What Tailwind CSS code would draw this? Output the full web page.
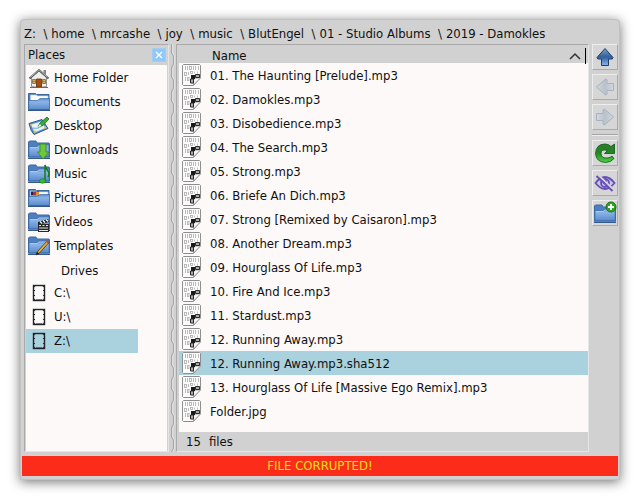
<!DOCTYPE html>
<html lang="en">
<head>
<meta charset="utf-8">
<meta name="viewport" content="width=device-width, initial-scale=1">
<title>File manager</title>
<script src="https://cdn.jsdelivr.net/npm/@tailwindcss/browser@4"></script>
</head>
<body class="h-screen bg-white px-5 pt-[19px] pb-[18px] font-['DejaVu_Sans_Condensed','DejaVu_Sans',sans-serif] text-[13px] leading-4 text-[#101010]">
<svg class="absolute size-0" aria-hidden="true">
  <defs>
    <linearGradient id="blue" x1="0" y1="0" x2="0" y2="1"><stop offset="0" stop-color="#5c8fd0"/><stop offset=".3" stop-color="#8bb4e6"/><stop offset="1" stop-color="#5a8bcc"/></linearGradient>
    <linearGradient id="up" x1="0" y1="0" x2="0" y2="1"><stop offset="0" stop-color="#7ba0bf"/><stop offset=".5" stop-color="#315f9c"/><stop offset="1" stop-color="#8ab6f2"/></linearGradient>
    <linearGradient id="green" x1="0" y1="0" x2="0" y2="1"><stop offset="0" stop-color="#2f7a2f"/><stop offset=".5" stop-color="#1f8a1f"/><stop offset="1" stop-color="#4cd542"/></linearGradient>
    <linearGradient id="pale" x1="0" y1="0" x2="0" y2="1"><stop offset="0" stop-color="#d5d8dc"/><stop offset=".5" stop-color="#b9c1ca"/><stop offset="1" stop-color="#d3d8de"/></linearGradient>
    <symbol id="folder" viewBox="0 0 22 20">
      <path d="M.5 17V2L1.500 1H8l1 2h12l.5 1v13z" fill="#4f80be" stroke="#3a68a5"/>
      <path d="M1 6.500H9l1.500-1.500h10.500v11.500H1z" fill="url(#blue)" stroke="#3f70b0" stroke-width=".7"/>
      <path d="M0 17.500h22v1.500H0z" fill="#35598a"/>
      <path d="M2 7.500h7.500L11 6h9.500" fill="none" stroke="#acd0f5" stroke-width=".8"/>
    </symbol>
    <symbol id="openfolder" viewBox="0 0 22 20">
      <path d="M.5 17V1.500h7l1 1h12.500v14.500z" fill="#4f80be" stroke="#3a68a5"/>
      <path d="M2.500 3h6l1 1h10.500v5H2.500z" fill="#fff" stroke="#bdc8d8" stroke-width=".6"/>
      <path d="M.7 8.500h9l2-2h9.800v11H.7z" fill="url(#blue)" stroke="#3467a8" stroke-width=".7"/>
      <path d="M0 17.500h22v1.500H0z" fill="#35598a"/>
    </symbol>
    <symbol id="file" viewBox="0 0 20 22">
      <path d="M1.500.5h16l1 1v12l-7 8h-10l-1-1V1.500z" fill="#fbfbfb" stroke="#8e8e8e"/>
      <g fill="none" stroke="#b4b4b4" stroke-width=".9">
        <path d="M3.500 2v4M5.500 2v4M11.500 2v4M13.500 2v4M16.500 2v4M6.500 8v3M12.500 7.500v2M15.500 7.500v2M3.500 13v4"/>
        <rect x="7.500" y="2.500" width="2" height="3"/><rect x="2.500" y="8.500" width="2" height="3"/><rect x="8.500" y="7.500" width="2" height="2"/><rect x="5.500" y="13.500" width="1.500" height="3"/>
      </g>
      <path d="M11.500 21v-5l1.500-2h5.500z" fill="#f5f5f5" stroke="#8a8a8a" stroke-width=".8"/>
      <path d="M9 11h4v4H9z" fill="#171717"/>
      <path d="M13.500 10.500h4v3h-4zM8.500 15h3v4h-3z" fill="#aaa" stroke="#2b2b2b"/>
    </symbol>
    <symbol id="drive" viewBox="0 0 14 18">
      <rect x="1.500" y="1.500" width="11" height="15" fill="none" stroke="#202427" stroke-width="1.400"/>
      <path d="M1 3l1-2h2.500L2 3.500zM13 3l-1-2H9.500l2.500 2.500zM1 15l1 2h2.500L2 14.500zM13 15l-1 2H9.500l2.500-2.500z" fill="#202427"/>
      <path d="M4 15.500h6V17H4zM2 6h1v1H2zM11 6h1v1h-1zM2 11h1v1H2zM11 11h1v1h-1z" fill="#202427"/>
    </symbol>
    <symbol id="home" viewBox="0 0 22 22">
      <path d="M3.500 10v9.500l7.500 1 7.500-1V10L11 4z" fill="#eeeeea" stroke="#777" stroke-width=".8"/>
      <path d="M15.500 3H18v5l-2.500-2z" fill="#888"/>
      <path d="M1.500 11.500L11 3l9.500 8.500" fill="none" stroke="#54585b" stroke-width="2"/>
      <path d="M2.500 10.300L11 2.700l8.500 7.600" fill="none" stroke="#b8bcbf" stroke-width=".9"/>
      <path d="M8.500 12h5v8h-5z" fill="#a94e0d" stroke="#5e2d0b" stroke-width=".8"/>
      <path d="M4.500 12.500h3v4h-3zM14.500 12.500h3v4h-3z" fill="#e9c481" stroke="#866336" stroke-width=".8"/>
      <path d="M6 12.500v4M4.500 14.500h3M16 12.500v4M14.500 14.500h3" stroke="#866336" stroke-width=".5"/>
      <path d="M2 20.500h18" stroke="#666"/>
    </symbol>
    <symbol id="desktop" viewBox="0 0 22 20">
      <path d="M1 7.500L14 3.500l6 9L6 18.500Q3 16 1 7.500z" fill="#5791dc" stroke="#2a5799"/>
      <path d="M3 8.500l10-3 4.500 6.500-11 4.500z" fill="#e3f2fb"/>
      <path d="M2 8.500l3-.8-2 3zM5.500 17l1-3 2.500 2zM15 13l2-3 2 2z" fill="#f5c72e"/>
      <path d="M5 12q5 2 10-4" fill="none" stroke="#9ac0d7" stroke-width="1.500"/>
      <path d="M10 11l2-4 7-6 2 2-6 6.500z" fill="#3caa35" stroke="#1c6d20" stroke-width=".8"/>
      <path d="M9.500 11.500L12 8l1.500 2z" fill="#eee"/>
    </symbol>
    <symbol id="arrow" viewBox="0 0 20 20"><path d="M10 1.500l8 9-.8 1.500H13.500v6.500h-7V12H2.800L2 10.500z" stroke-linejoin="round"/></symbol>
  </defs>
</svg>

<main class="flex h-full flex-col rounded-t-[4px] border border-[#c2c2c2] bg-[#d1d1d1] px-px pb-[3px] shadow-[0_2px_12px_rgba(0,0,0,0.55)]">
  <nav aria-label="Path" class="flex h-6 shrink-0 items-center gap-1 pt-1 pl-0.5 whitespace-pre">
    <button type="button">Z:  \</button>
    <button type="button">home  \</button>
    <button type="button">mrcashe  \</button>
    <button type="button">joy  \</button>
    <button type="button">music  \</button>
    <button type="button">BlutEngel  \</button>
    <button type="button">01 - Studio Albums  \</button>
    <button type="button">2019 - Damokles</button>
  </nav>

  <div class="flex min-h-0 flex-1 pl-0.5">
    <aside class="flex w-[145px] shrink-0 flex-col border-t border-r border-b border-l border-t-[#a9a9a9] border-r-[#e5e5e5] border-b-[#e5e5e5] border-l-[#a9a9a9] pl-px pr-px">
      <header class="flex h-5 shrink-0 items-center justify-between pr-0.5 pl-0.5">
        <h2>Places</h2>
        <button type="button" aria-label="Close places" class="flex size-3 items-center justify-center bg-[#8fc8fa] outline outline-[#a8ccec]">
          <svg viewBox="0 0 8 8" class="size-2"><path d="M1 1l6 6M7 1L1 7" stroke="#fff" stroke-width="1.300"/></svg>
        </button>
      </header>
      <ul class="min-h-0 flex-1 bg-[#fdf9f8]">
        <li><a href="#home" class="flex h-6 items-center gap-1 pt-0.5 pl-0.5"><svg class="h-[22px] w-[22px]"><use href="#home"/></svg>Home Folder</a></li>
        <li><a href="#documents" class="flex h-6 items-center gap-1 pt-0.5 pl-0.5"><svg class="h-5 w-[22px]"><use href="#openfolder"/></svg>Documents</a></li>
        <li><a href="#desktop" class="flex h-6 items-center gap-1 pt-0.5 pl-0.5"><svg class="h-5 w-[22px]"><use href="#desktop"/></svg>Desktop</a></li>
        <li><a href="#downloads" class="flex h-6 items-center gap-1 pt-0.5 pl-0.5"><svg class="h-5 w-[22px]" viewBox="0 0 22 20"><use href="#folder" width="22" height="20"/><path d="M12 4h6v8h3l-6 7-5.500-7H12z" fill="#6dc63b" stroke="#338b20" stroke-width=".8"/></svg>Downloads</a></li>
        <li><a href="#music" class="flex h-6 items-center gap-1 pt-0.5 pl-0.5"><svg class="h-5 w-[22px]" viewBox="0 0 22 20"><use href="#folder" width="22" height="20"/><path d="M17 17V1q1 4 3 6t0 6" fill="none" stroke="#147c1b" stroke-width="1.500"/><ellipse cx="14.500" cy="17" rx="3" ry="2.200" fill="#35bb2c" stroke="#147c1b" stroke-width=".7"/></svg>Music</a></li>
        <li><a href="#pictures" class="flex h-6 items-center gap-1 pt-0.5 pl-0.5"><svg class="h-5 w-[22px]" viewBox="0 0 22 20"><use href="#openfolder" width="22" height="20"/><path d="M3 3.500h8v4H3z" fill="#3d1835"/><path d="M5 4h3v3H5z" fill="#8b366e"/><path d="M8 4h3v3H8z" fill="#dc9332"/></svg>Pictures</a></li>
        <li><a href="#videos" class="flex h-6 items-center gap-1 pt-0.5 pl-0.5"><svg class="h-5 w-[22px]" viewBox="0 0 22 20"><use href="#folder" width="22" height="20"/><path d="M10 10l10-3 1 3-11 3z" fill="#222"/><path d="M12 9.500l2 2M15 8.500l2 2M18 7.500l2 2" stroke="#fff" stroke-width="1.200"/><path d="M10 12h11v8H10z" fill="#292929"/><path d="M11 13.500h2M14.500 13.500h2M18 13.500h2M11 16h9M11 18.500h9" stroke="#e6e6e6"/></svg>Videos</a></li>
        <li><a href="#templates" class="flex h-6 items-center gap-1 pt-0.5 pl-0.5"><svg class="h-5 w-[22px]" viewBox="0 0 22 20"><use href="#folder" width="22" height="20"/><path d="M8 19l2-4 9-10 2 1.500-9 10z" fill="#e7ad38" stroke="#493315" stroke-width=".8"/><path d="M19 4l2.200 1.800-1.400 1.500-2.200-1.800z" fill="#c54747"/><path d="M8 19l1-3 2 1.500z" fill="#171717"/></svg>Templates</a></li>
        <li class="flex h-6 items-center pt-1 pl-[35px]">Drives</li>
        <li><a href="#c" class="flex h-6 items-center gap-2 pl-1.5"><svg class="h-[18px] w-3.5"><use href="#drive"/></svg>C:\</a></li>
        <li><a href="#u" class="flex h-6 items-center gap-2 pl-1.5"><svg class="h-[18px] w-3.5"><use href="#drive"/></svg>U:\</a></li>
        <li><a href="#z" aria-current="true" class="flex h-6 w-28 items-center gap-2 bg-[#a9d1de] pl-1.5"><svg class="h-[18px] w-3.5"><use href="#drive"/></svg>Z:\</a></li>
      </ul>
    </aside>

    <svg class="h-full w-[7px] shrink-0" aria-hidden="true">
      <defs><pattern id="wave" width="7" height="24" patternUnits="userSpaceOnUse"><path d="M3.500 0v9l2 3v8l-2 4" fill="none" stroke="#e4e4e4"/><path d="M2.500 0v9l2 3v8l-2 4" fill="none" stroke="#a2a2a2"/></pattern></defs>
      <rect width="7" height="100%" fill="url(#wave)"/>
    </svg>

    <section class="flex min-w-0 flex-1 flex-col border-t border-r border-b border-l border-t-[#a9a9a9] border-r-[#e5e5e5] border-b-[#e5e5e5] border-l-[#a9a9a9] pl-0.5">
      <div class="min-h-0 flex-1 bg-[#fdf9f8]">
        <table class="w-full border-collapse">
          <thead>
            <tr class="h-[18px] bg-[#d1d1d1]">
              <th class="w-[31px] p-0"></th>
              <th scope="col" class="p-0 text-left font-normal">
                <div class="flex h-[18px] items-center justify-between pt-1 pr-0.5 pl-0.5">Name
                  <span class="flex items-center gap-1"><svg class="h-2 w-3" viewBox="0 0 12 8"><path d="M1 7l5-5 5 5" fill="none" stroke="#333" stroke-width="1.500"/></svg><span class="h-4 w-px bg-black"></span></span>
                </div>
              </th>
            </tr>
          </thead>
          <tbody>
            <tr class="h-6"><td class="p-0 pl-[3px]"><svg class="h-[22px] w-5"><use href="#file"/></svg></td><td class="p-0 pt-0.5">01. The Haunting [Prelude].mp3</td></tr>
            <tr class="h-6"><td class="p-0 pl-[3px]"><svg class="h-[22px] w-5"><use href="#file"/></svg></td><td class="p-0 pt-0.5">02. Damokles.mp3</td></tr>
            <tr class="h-6"><td class="p-0 pl-[3px]"><svg class="h-[22px] w-5"><use href="#file"/></svg></td><td class="p-0 pt-0.5">03. Disobedience.mp3</td></tr>
            <tr class="h-6"><td class="p-0 pl-[3px]"><svg class="h-[22px] w-5"><use href="#file"/></svg></td><td class="p-0 pt-0.5">04. The Search.mp3</td></tr>
            <tr class="h-6"><td class="p-0 pl-[3px]"><svg class="h-[22px] w-5"><use href="#file"/></svg></td><td class="p-0 pt-0.5">05. Strong.mp3</td></tr>
            <tr class="h-6"><td class="p-0 pl-[3px]"><svg class="h-[22px] w-5"><use href="#file"/></svg></td><td class="p-0 pt-0.5">06. Briefe An Dich.mp3</td></tr>
            <tr class="h-6"><td class="p-0 pl-[3px]"><svg class="h-[22px] w-5"><use href="#file"/></svg></td><td class="p-0 pt-0.5">07. Strong [Remixed by Caisaron].mp3</td></tr>
            <tr class="h-6"><td class="p-0 pl-[3px]"><svg class="h-[22px] w-5"><use href="#file"/></svg></td><td class="p-0 pt-0.5">08. Another Dream.mp3</td></tr>
            <tr class="h-6"><td class="p-0 pl-[3px]"><svg class="h-[22px] w-5"><use href="#file"/></svg></td><td class="p-0 pt-0.5">09. Hourglass Of Life.mp3</td></tr>
            <tr class="h-6"><td class="p-0 pl-[3px]"><svg class="h-[22px] w-5"><use href="#file"/></svg></td><td class="p-0 pt-0.5">10. Fire And Ice.mp3</td></tr>
            <tr class="h-6"><td class="p-0 pl-[3px]"><svg class="h-[22px] w-5"><use href="#file"/></svg></td><td class="p-0 pt-0.5">11. Stardust.mp3</td></tr>
            <tr class="h-6"><td class="p-0 pl-[3px]"><svg class="h-[22px] w-5"><use href="#file"/></svg></td><td class="p-0 pt-0.5">12. Running Away.mp3</td></tr>
            <tr class="h-6 bg-[#a9d1de]" aria-selected="true"><td class="p-0 pl-[3px]"><svg class="h-[22px] w-5"><use href="#file"/></svg></td><td class="p-0 pt-0.5">12. Running Away.mp3.sha512</td></tr>
            <tr class="h-6"><td class="p-0 pl-[3px]"><svg class="h-[22px] w-5"><use href="#file"/></svg></td><td class="p-0 pt-0.5">13. Hourglass Of Life [Massive Ego Remix].mp3</td></tr>
            <tr class="h-6"><td class="p-0 pl-[3px]"><svg class="h-[22px] w-5"><use href="#file"/></svg></td><td class="p-0 pt-0.5">Folder.jpg</td></tr>
          </tbody>
        </table>
      </div>
      <p class="flex h-[19px] shrink-0 items-center gap-2 pl-[7px]"><span>15</span><span>files</span></p>
    </section>

    <div role="toolbar" aria-label="Actions" class="ml-[3px] flex w-[26px] shrink-0 flex-col gap-1">
      <button type="button" aria-label="Up" class="flex h-[26px] items-center justify-center border border-t-[#ededed] border-r-[#aaa] border-b-[#aaa] border-l-[#ededed] bg-[#d6d6d6]"><svg class="size-5" fill="url(#up)" stroke="#1f3d6b"><use href="#arrow"/></svg></button>
      <button type="button" disabled aria-label="Back" class="flex h-[26px] items-center justify-center border border-t-[#ededed] border-r-[#aaa] border-b-[#aaa] border-l-[#ededed] bg-[#d6d6d6]"><svg class="size-5 -rotate-90" fill="url(#pale)" stroke="#a8b2be"><use href="#arrow"/></svg></button>
      <button type="button" disabled aria-label="Forward" class="flex h-[26px] items-center justify-center border border-t-[#ededed] border-r-[#aaa] border-b-[#aaa] border-l-[#ededed] bg-[#d6d6d6]"><svg class="size-5 rotate-90" fill="url(#pale)" stroke="#a8b2be"><use href="#arrow"/></svg></button>
      <div role="separator" class="h-0.5 border-t border-b border-t-[#a3a3a3] border-b-[#ededed]"></div>
      <button type="button" aria-label="Refresh" class="flex h-[26px] items-center justify-center border border-t-[#ededed] border-r-[#aaa] border-b-[#aaa] border-l-[#ededed] bg-[#d6d6d6]"><svg class="size-[22px]" viewBox="0 0 22 22"><path d="M17 4.500L20.500 2v9.500h-10l3-3Q7 6.500 7 11.500q.5 5 6 4.500 3.500 0 5-2l2 2.500q-3 4-8.500 4Q2 20 1.500 11.500 2 2 11 2q4 0 6 2.500z" fill="url(#green)" stroke="#0d5614" stroke-width=".8"/></svg></button>
      <button type="button" aria-label="Toggle hidden files" class="flex h-[26px] items-center justify-center border border-t-[#ededed] border-r-[#aaa] border-b-[#aaa] border-l-[#ededed] bg-[#d6d6d6]"><svg class="size-[22px]" viewBox="0 0 22 22" fill="none" stroke="#6651b8" stroke-width="1.800"><path d="M1.500 11Q11-1 20.500 11 11 23 1.500 11z" fill="#cbc5e0"/><circle cx="11" cy="11" r="4"/><circle cx="11" cy="10" r="1.300" fill="#6651b8"/><path d="M4 3l16 15" stroke="#d6d6d6" stroke-width="2"/><path d="M2.500 4l16 15"/></svg></button>
      <button type="button" aria-label="New folder" class="flex h-[26px] items-center justify-center border border-t-[#ededed] border-r-[#aaa] border-b-[#aaa] border-l-[#ededed] bg-[#d6d6d6]"><svg class="size-6" viewBox="0 0 24 24"><use href="#folder" x="1" y="3" width="22" height="20"/><circle cx="18" cy="6" r="5" fill="#2fa522" stroke="#14741a"/><path d="M18 3v6M15 6h6" stroke="#fff" stroke-width="2"/></svg></button>
    </div>
  </div>

  <p role="status" class="mt-1 flex h-5 shrink-0 items-center justify-center bg-[#fb2c19] text-[#ebe31b]">FILE CORRUPTED!</p>
</main>
</body>
</html>
